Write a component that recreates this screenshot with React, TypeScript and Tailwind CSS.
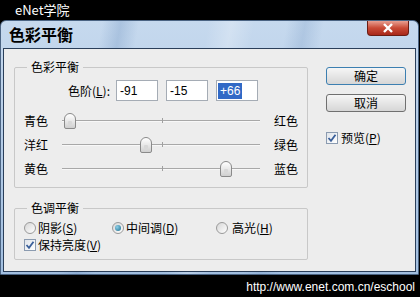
import React from "react";

const cjk = { fontFamily: '"Noto Sans CJK SC", "Noto Sans", sans-serif' };

function Thumb({ left }: { left: number }) {
  return (
    <div
      className="absolute top-1/2 -translate-y-1/2 w-[12px] h-[16px] rounded-t-[6px] rounded-b-[2px] border border-[#8a8a8a] bg-[linear-gradient(to_bottom,#ffffff,#e4e4e4_60%,#cfcfcf)]"
      style={{ left }}
    >
      <div className="absolute left-[3px] right-[3px] bottom-[3px] h-[4px] bg-[#d8d8d8] rounded-[1px]" />
    </div>
  );
}

function SliderRow({ left, right, pos }: { left: string; right: string; pos: number }) {
  return (
    <div className="flex items-center h-[24px] pl-[9px]">
      <div className="w-[38px] text-[12px] text-black" style={cjk}>{left}</div>
      <div className="relative w-[198px] h-[24px]">
        <div className="absolute left-0 right-0 top-[11px] h-[1px] bg-[#a8a8a8]" />
        <div className="absolute left-0 right-0 top-[12px] h-[1px] bg-[#f8f8f8]" />
        <div className="absolute left-[100px] top-[9px] w-[1px] h-[5px] bg-[#a0a0a0]" />
        <Thumb left={pos} />
      </div>
      <div className="ml-[14px] text-[12px] text-black" style={cjk}>{right}</div>
    </div>
  );
}

function Radio({ checked }: { checked?: boolean }) {
  return (
    <div className="w-[12px] h-[12px] rounded-full border border-[#9a9a9a] bg-[linear-gradient(135deg,#d6d6d6,#ffffff)] flex items-center justify-center">
      {checked && <div className="w-[6px] h-[6px] rounded-full bg-[radial-gradient(circle_at_35%_35%,#8fd0e8,#1a6d8e)]" />}
    </div>
  );
}

function Check() {
  return (
    <div className="w-[12px] h-[12px] border border-[#8b9bb0] bg-[linear-gradient(135deg,#dfe4ea,#ffffff)] flex items-center justify-center">
      <svg width="10" height="10" viewBox="0 0 10 10">
        <path d="M1.5 5 L4 7.8 L8.5 1.8" fill="none" stroke="#3a5f9a" strokeWidth="1.8" />
      </svg>
    </div>
  );
}

function Input({ value, selected }: { value: string; selected?: boolean }) {
  return (
    <div className="w-[42px] h-[21px] bg-white border border-[#a5acb5] flex items-center pl-[1px] text-[12px]" style={{ fontFamily: '"Liberation Sans", Arial, sans-serif' }}>
      {selected ? <span className="bg-[#3169c6] text-white px-[2px] leading-[16px]">{value}</span> : <span className="text-black pl-[2px]">{value}</span>}
    </div>
  );
}

function Button({ label, primary }: { label: string; primary?: boolean }) {
  return (
    <div
      className={`w-[80px] h-[18px] rounded-[3px] border ${primary ? "border-[#3c7fb1]" : "border-[#707070]"} bg-[linear-gradient(to_bottom,#f6f6f6,#e6e6e6_50%,#d6d6d6)] flex items-center justify-center text-[12px] text-black`}
      style={cjk}
    >
      {label}
    </div>
  );
}

export default function App() {
  return (
    <div className="w-[420px] h-[297px] bg-black flex flex-col overflow-hidden">
      <div className="h-[20px] pl-[15px] flex items-center text-white text-[13px]" style={cjk}>
        eNet学院
      </div>
      <div className="h-[255px] w-[419px] rounded-t-[6px] border border-[#4b6483] bg-[linear-gradient(100deg,transparent_22%,rgba(90,130,180,0.25)_26%,transparent_30%,transparent_45%,rgba(255,255,255,0.25)_50%,transparent_55%,transparent_62%,rgba(90,130,180,0.2)_66%,transparent_70%),linear-gradient(to_bottom,#c6d9ee,#a2bfe0)] px-[2px] pb-[2px] flex flex-col">
        <div className="h-[27px] flex items-start justify-between">
          <div className="pl-[6px] pt-[4px] text-[16px] font-bold text-black leading-[18px]" style={cjk}>
            色彩平衡
          </div>
          <div className="mr-[7px] w-[42px] h-[15px] rounded-b-[4px] border border-t-0 border-[#6b1d14] bg-[linear-gradient(to_bottom,#e8a092,#c94a36_50%,#a8281a)] flex items-center justify-center">
            <svg width="12" height="10" viewBox="0 0 12 10">
              <path d="M2 1 L10 9 M10 1 L2 9" stroke="#ffffff" strokeWidth="2.4" />
            </svg>
          </div>
        </div>
        <div className="flex-1 border border-[#2b3f5a] bg-[#ededed] flex pl-[10px] pt-[18px]">
          <div className="flex flex-col">
            <div className="relative w-[294px] h-[121px] border border-[#c8c8c8] rounded-[2px]">
              <div className="absolute left-[12px] -top-[8px] px-[4px] bg-[#ededed] text-[12px] leading-[14px] text-black" style={cjk}>
                色彩平衡
              </div>
              <div className="flex items-center mt-[12px] h-[21px]">
                <div className="w-[95px] text-right text-[12px] text-black" style={cjk}>
                  色阶(<span className="underline">L</span>):
                </div>
                <div className="ml-[6px] flex gap-[8px]">
                  <Input value="-91" />
                  <Input value="-15" />
                  <Input value="+66" selected />
                </div>
              </div>
              <div className="mt-[8px] flex flex-col">
                <SliderRow left="青色" right="红色" pos={2} />
                <SliderRow left="洋红" right="绿色" pos={78} />
                <SliderRow left="黄色" right="蓝色" pos={158} />
              </div>
            </div>
            <div className="relative mt-[20px] w-[294px] h-[52px] border border-[#c8c8c8] rounded-[2px]">
              <div className="absolute left-[12px] -top-[8px] px-[4px] bg-[#ededed] text-[12px] leading-[14px] text-black" style={cjk}>
                色调平衡
              </div>
              <div className="flex items-center pl-[9px] mt-[12px] h-[14px] text-[12px] text-black" style={cjk}>
                <div className="w-[88px] flex items-center gap-[2px]">
                  <Radio />
                  <span>阴影(<span className="underline">S</span>)</span>
                </div>
                <div className="w-[104px] flex items-center gap-[2px]">
                  <Radio checked />
                  <span>中间调(<span className="underline">D</span>)</span>
                </div>
                <div className="flex items-center gap-[4px]">
                  <Radio />
                  <span>高光(<span className="underline">H</span>)</span>
                </div>
              </div>
              <div className="flex items-center gap-[2px] pl-[9px] mt-[3px] h-[14px] text-[12px] text-black" style={cjk}>
                <Check />
                <span>保持亮度(<span className="underline">V</span>)</span>
              </div>
            </div>
          </div>
          <div className="ml-[18px] flex flex-col">
            <Button label="确定" primary />
            <div className="mt-[9px]">
              <Button label="取消" />
            </div>
            <div className="mt-[17px] flex items-center gap-[3px] text-[12px] text-black" style={cjk}>
              <Check />
              <span>预览(<span className="underline">P</span>)</span>
            </div>
          </div>
        </div>
      </div>
      <div className="flex-1 flex items-end justify-end pr-[5px] pb-[1px] text-white text-[12px]" style={{ fontFamily: '"Liberation Sans", Arial, sans-serif' }}>
        http://www.enet.com.cn/eschool
      </div>
    </div>
  );
}
